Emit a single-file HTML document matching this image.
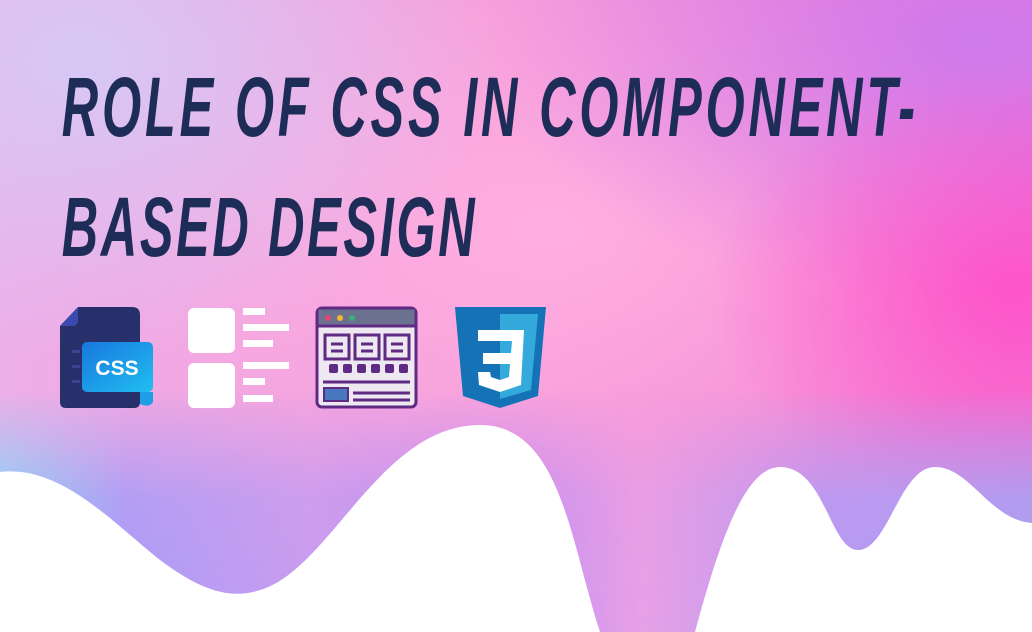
<!DOCTYPE html>
<html><head><meta charset="utf-8"><style>
html,body{margin:0;padding:0}
body{width:1032px;height:632px;overflow:hidden;position:relative;
background:
radial-gradient(ellipse 300px 220px at 1010px 290px, rgba(255,80,200,0.9), rgba(255,80,200,0) 100%),
radial-gradient(ellipse 500px 260px at 980px 40px, rgba(200,120,240,0.85), rgba(200,120,240,0) 100%),
radial-gradient(ellipse 420px 300px at 80px 60px, rgba(215,200,245,1), rgba(215,200,245,0) 100%),
radial-gradient(ellipse 500px 300px at 550px 230px, rgba(255,175,225,1), rgba(255,175,225,0) 100%),
linear-gradient(90deg,#eeaee8 0%,#f59ad8 50%,#f37ad3 100%);}
svg{position:absolute;left:0;top:0}
</style></head><body>
<svg width="1032" height="632" viewBox="0 0 1032 632">
<defs>
<linearGradient id="wv" x1="0" y1="0" x2="1" y2="0">
<stop offset="0" stop-color="#7fd6f8"/>
<stop offset="0.12" stop-color="#a79cf6"/>
<stop offset="0.3" stop-color="#c79cf0"/>
<stop offset="0.47" stop-color="#b58cf8"/>
<stop offset="0.62" stop-color="#e7a0e6"/>
<stop offset="0.8" stop-color="#b29cf4"/>
<stop offset="1" stop-color="#a6a2f4"/>
</linearGradient>
<linearGradient id="wvfade" x1="0" y1="0" x2="0" y2="1">
<stop offset="0" stop-color="#fff" stop-opacity="0"/>
<stop offset="0.45" stop-color="#fff" stop-opacity="0.85"/>
<stop offset="1" stop-color="#fff" stop-opacity="1"/>
</linearGradient>
<mask id="m"><rect x="0" y="390" width="1032" height="242" fill="url(#wvfade)"/></mask>
<linearGradient id="blu" x1="0" y1="0" x2="1" y2="1"><stop offset="0" stop-color="#1877de"/><stop offset="1" stop-color="#20bff0"/></linearGradient>
</defs>
<rect x="0" y="390" width="1032" height="242" fill="url(#wv)" mask="url(#m)"/>
<path fill="#fff" d="M0,472 C60,465 110,520 160,560 C200,590 230,600 260,590 C330,570 380,425 480,425 C560,425 570,540 600,632 L695,632 C720,540 745,467 780,467 C825,467 830,550 858,550 C888,550 900,467 935,467 C970,467 990,520 1032,523 L1032,632 L0,632 Z"/>
<g transform="scale(0.6,1)">
<text x="103" y="136" font-family="Liberation Sans, sans-serif" font-weight="bold" font-style="italic" font-size="84" fill="#1e2d57" textLength="1422" lengthAdjust="spacing">ROLE OF CSS IN COMPONENT-</text>
<text x="103" y="256" font-family="Liberation Sans, sans-serif" font-weight="bold" font-style="italic" font-size="84" fill="#1e2d57" textLength="688" lengthAdjust="spacing">BASED DESIGN</text>
</g>
<!-- icon 1 -->
<path d="M78,307 L132,307 Q140,307 140,315 L140,402 Q140,408 134,408 L66,408 Q60,408 60,402 L60,326 Z" fill="#27306b"/>
<path d="M60,326 L78,307 L78,320 Q78,326 72,326 Z" fill="#3a4ab0"/>
<rect x="72" y="350" width="8" height="3" fill="#3a4590"/><rect x="72" y="365" width="8" height="3" fill="#3a4590"/><rect x="72" y="380" width="8" height="3" fill="#3a4590"/>
<rect x="82" y="342" width="71" height="50" rx="5" fill="url(#blu)"/>
<path d="M140,392 L153,392 L153,402 Q150,408 140,404Z" fill="#1c9fe4"/>
<text x="117" y="375" text-anchor="middle" font-family="Liberation Sans, sans-serif" font-weight="bold" font-size="21" fill="#fff">CSS</text>
<!-- icon 2 -->
<g fill="#fff">
<rect x="188" y="308" width="47" height="45" rx="6"/><rect x="188" y="363" width="47" height="45" rx="6"/>
<rect x="243" y="308" width="22" height="7"/><rect x="243" y="324" width="46" height="7"/><rect x="243" y="340" width="30" height="7"/>
<rect x="243" y="362" width="46" height="7"/><rect x="243" y="378" width="22" height="7"/><rect x="243" y="395" width="30" height="7"/>
</g>
<!-- icon 3 -->
<rect x="317" y="308" width="99" height="99" rx="5" fill="#eee8f0" stroke="#5e2a84" stroke-width="3"/>
<rect x="318.5" y="309.5" width="96" height="16" fill="#6d7190"/>
<line x1="317" y1="326" x2="416" y2="326" stroke="#5e2a84" stroke-width="3"/>
<circle cx="328" cy="318" r="3" fill="#e0466a"/><circle cx="340" cy="318" r="3" fill="#f2b630"/><circle cx="352" cy="318" r="3" fill="#3cb371"/>
<g fill="none" stroke="#5e2a84" stroke-width="3"><rect x="325" y="335" width="24" height="24"/><rect x="355" y="335" width="24" height="24"/><rect x="385" y="335" width="24" height="24"/></g>
<g stroke="#5e2a84" stroke-width="3"><line x1="331" y1="344" x2="343" y2="344"/><line x1="331" y1="351" x2="343" y2="351"/><line x1="361" y1="344" x2="373" y2="344"/><line x1="361" y1="351" x2="373" y2="351"/><line x1="391" y1="344" x2="403" y2="344"/><line x1="391" y1="351" x2="403" y2="351"/>
<line x1="323" y1="382" x2="410" y2="382"/><line x1="353" y1="393" x2="410" y2="393"/><line x1="353" y1="400" x2="410" y2="400"/></g>
<g fill="#5e2a84"><rect x="329" y="364" width="9" height="9" rx="2"/><rect x="343" y="364" width="9" height="9" rx="2"/><rect x="357" y="364" width="9" height="9" rx="2"/><rect x="371" y="364" width="9" height="9" rx="2"/><rect x="385" y="364" width="9" height="9" rx="2"/><rect x="399" y="364" width="9" height="9" rx="2"/></g>
<rect x="324" y="388" width="24" height="13" fill="#4a78c0" stroke="#5e2a84" stroke-width="2"/>
<!-- icon 4 -->
<path d="M455,307 L546,307 L538,396 L500,408 L463,396 Z" fill="#1572b6"/>
<path d="M500,314 L538,314 L531,390 L500,399 Z" fill="#33a9dc"/>
<path d="M478,330 L524,330 L521,385 L500,392 L479,385 L478,372 L490,372 L491,377 L500,380 L509,377 L510,364 L483,364 L483,353 L511,353 L512,341 L478,341 Z" fill="#fff"/>
</svg>
</body></html>
